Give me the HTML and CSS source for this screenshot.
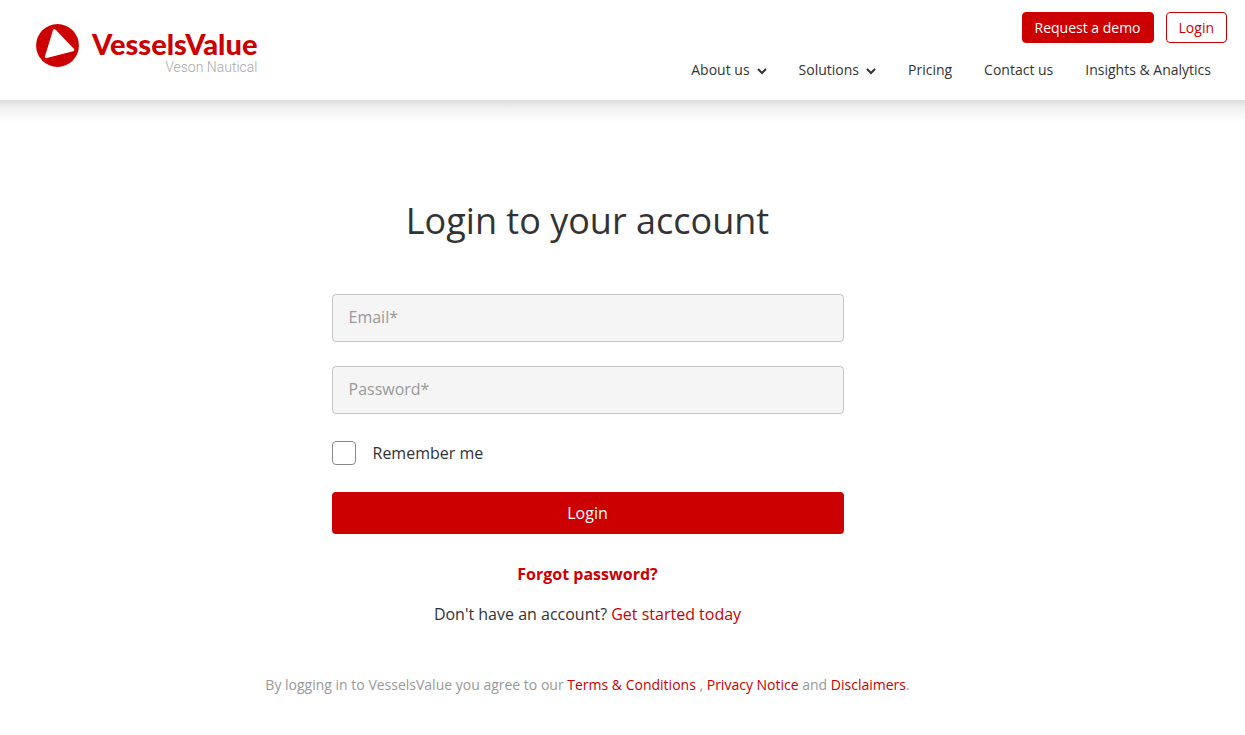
FILE: index.html
```html
<!DOCTYPE html>
<html lang="en">

<head>
    <meta charset="UTF-8">
    <meta name="viewport" content="width=device-width, initial-scale=1.0">
    <title>Login | VesselsValue</title>
    <link rel="stylesheet" href="styles.css">
</head>

<body>
    <header class="header">
        <a class="logo" href="#">
            <svg class="logo-mark" viewBox="0 0 43 43" aria-hidden="true">
                <circle cx="21.5" cy="21.5" r="21.4" fill="#c00" />
                <path d="M18.4 6.6 L36.8 25.8 L10.4 32.6 Z" fill="#fff" stroke="#fff" stroke-width="3" stroke-linejoin="round" />
            </svg>
            <span class="logo-text">
                <span class="logo-name">VesselsValue</span>
                <span class="logo-sub">Veson Nautical</span>
            </span>
        </a>
        <div class="header-right">
            <div class="actions">
                <a class="btn btn-red" href="#">Request a demo</a>
                <a class="btn" href="#">Login</a>
            </div>
            <nav class="nav">
                <a href="#">About us
                    <svg class="arrow" viewBox="0 0 10 8" aria-hidden="true"><path d="M1 2 L5 6 L9 2" /></svg>
                </a>
                <a href="#">Solutions
                    <svg class="arrow" viewBox="0 0 10 8" aria-hidden="true"><path d="M1 2 L5 6 L9 2" /></svg>
                </a>
                <a href="#">Pricing</a>
                <a href="#">Contact us</a>
                <a href="#">Insights &amp; Analytics</a>
            </nav>
        </div>
    </header>

    <main class="main">
        <h1>Login to your account</h1>
        <form class="login-form">
            <input class="field" type="email" placeholder="Email*" aria-label="Email">
            <input class="field" type="password" placeholder="Password*" aria-label="Password">
            <div class="remember">
                <input type="checkbox" id="remember">
                <label for="remember">Remember me</label>
            </div>
            <button class="submit" type="submit">Login</button>
        </form>
        <p class="forgot"><a href="#">Forgot password?</a></p>
        <p class="signup">Don't have an account? <a href="#">Get started today</a></p>
        <p class="terms">By logging in to VesselsValue you agree to our <a href="#">Terms &amp; Conditions</a> , <a href="#">Privacy Notice</a> and <a href="#">Disclaimers</a>.</p>
    </main>
</body>

</html>
```
FILE: styles.css
```css
* {
    box-sizing: border-box;
    margin: 0;
    padding: 0;
}

body {
    font-family: "Open Sans", sans-serif;
    font-size: 16px;
    line-height: 24px;
    color: #333;
    background-color: #fff;
}

a {
    color: #c00;
    text-decoration: none;
}

/* header */
.header {
    display: flex;
    justify-content: space-between;
    align-items: flex-start;
    padding: 12px 18px 18px 36px;
    background-color: #fff;
}

.logo {
    display: flex;
    gap: 13px;
    padding-top: 12px;
}

.logo-mark {
    width: 43px;
    height: 43px;
}

.logo-text {
    display: flex;
    flex-direction: column;
    padding-top: 4px;
}

.logo-name {
    font-family: Lato, sans-serif;
    font-size: 29px;
    font-weight: 900;
    line-height: 32px;
}

.logo-sub {
    font-family: Roboto, sans-serif;
    font-size: 14px;
    font-weight: 300;
    line-height: 14px;
    text-align: right;
    color: #aaa;
}

.header-right {
    display: flex;
    flex-direction: column;
    align-items: flex-end;
    gap: 15px;
}

.actions {
    display: flex;
    gap: 12px;
}

.btn {
    padding: 4px 12px;
    border: 1px solid #c00;
    border-radius: 4px;
    font-size: 14px;
    line-height: 21px;
}

.btn-red {
    background-color: #c00;
    color: #fff;
}

.nav {
    display: flex;
    gap: 32px;
    padding: 0 16px;
}

.nav a {
    display: flex;
    align-items: center;
    gap: 7px;
    font-size: 14px;
    color: #333;
}

.arrow {
    width: 10px;
    height: 8px;
    margin-top: 2px;
    fill: none;
    stroke: #333;
    stroke-width: 2;
}

/* login */
.main {
    padding: 96px 70px 38px 0;
    text-align: center;
    /* soft shade under the header, full width */
    background: linear-gradient(#dedede, #f3f3f3 9px, #fff 22px);
}

h1 {
    font-size: 36px;
    font-weight: normal;
    line-height: 50px;
}

.login-form {
    display: flex;
    flex-direction: column;
    gap: 24px;
    max-width: 512px;
    margin: 48px auto 28px;
}

.field {
    width: 100%;
    height: 48px;
    padding: 0 16px 2px;
    border: 1px solid #c4c4c4;
    border-radius: 4px;
    background-color: #f5f5f5;
    font: inherit;
    color: #333;
}

.field::placeholder {
    color: #999;
    opacity: 1;
}

.remember {
    display: flex;
    align-items: center;
    gap: 17px;
    padding: 3px 0;
}

.remember input {
    appearance: none;
    width: 24px;
    height: 24px;
    border: 1px solid #888;
    border-radius: 4px;
    background-color: #fff;
}

.remember input:checked {
    background-color: #c00;
}

.submit {
    height: 42px;
    border: none;
    border-radius: 4px;
    background-color: #c00;
    font: inherit;
    color: #fff;
    cursor: pointer;
}

.forgot {
    margin-bottom: 16px;
    font-weight: bold;
}

.terms {
    margin-top: 47px;
    font-size: 14px;
    color: #999;
}
```
